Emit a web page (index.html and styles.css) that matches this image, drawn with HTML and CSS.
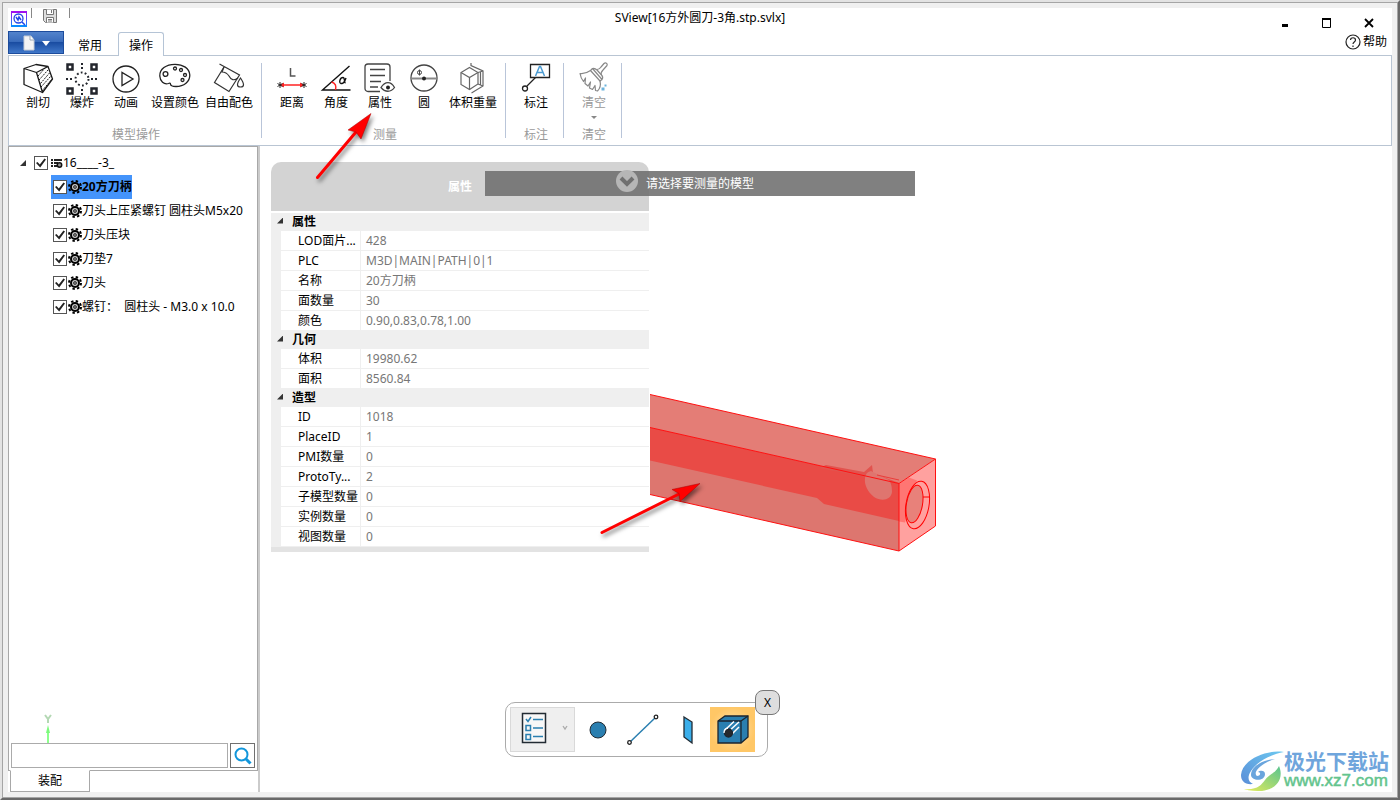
FILE: index.html
```html
<!doctype html>
<html lang="zh-CN">
<head>
  <meta charset="utf-8" />
  <title>SView[16方外圆刀-3角.stp.svlx]</title>
  <link rel="stylesheet" href="styles.css">
</head>

<body>
  <svg width="0" height="0" class="defs">
    <symbol id="gear" viewBox="0 0 14 14">
      <circle cx="7" cy="7" r="6" fill="none" stroke="#000" stroke-width="2" stroke-dasharray="2.4 2.31" />
      <circle cx="7" cy="7" r="4" fill="#ccc" stroke="#000" stroke-width="2" />
      <circle cx="7" cy="7" r="1.500" fill="#777" stroke="#444" />
    </symbol>
  </svg>
  <div class="frame">
    <header class="titlebar">
      <div class="quick">
        <svg class="logo" width="18" height="18" viewBox="0 0 18 18" fill="none">
          <defs>
            <linearGradient id="lg" x1="0" y1="0" x2="0" y2="1"><stop offset="0" stop-color="#a010ee" /><stop offset="1" stop-color="#0a8cff" /></linearGradient>
          </defs>
          <path d="M1 1h16v2H1z" fill="#a010ee" />
          <path d="M1 15h16v2H1z" fill="#0a8cff" />
          <rect x="1.500" y="1.500" width="15" height="15" stroke="url(#lg)" />
          <circle cx="8.500" cy="8.500" r="4.500" stroke="#2546e8" stroke-width="1.300" />
          <path d="M6 7l2 3 1-3 2 3M12 12l3 3" stroke="#2546e8" stroke-width="1.500" />
        </svg>
        <i></i>
        <button class="save" aria-label="保存">
          <svg width="16" height="16" viewBox="0 0 16 16" fill="none" stroke="#777">
            <path d="M1.500 1.500h13v13h-11l-2-2z" fill="#ddd" />
            <path d="M4.500 1.500v5h7v-5M4.500 14.500v-5h7v5" fill="#fff" />
            <path d="M9.500 2v3M6 11.500h4M6 13h4" />
          </svg>
        </button>
        <i></i>
      </div>
      <h1>SView[16方外圆刀-3角.stp.svlx]</h1>
      <div class="controls">
        <button aria-label="最小化"><svg width="12" height="12"><path d="M3 8.500h6" stroke="#000" stroke-width="3" /></svg></button>
        <button aria-label="最大化"><svg width="12" height="12" fill="none" stroke="#000"><path d="M1.500 1v9.500h8V1" /><path d="M1 2h9" stroke-width="2" /></svg></button>
        <button aria-label="关闭"><svg width="12" height="12"><path d="M2 2l8 8M10 2l-8 8" stroke="#000" stroke-width="1.800" /></svg></button>
      </div>
    </header>

    <nav class="tabs">
      <button class="file" aria-label="文件">
        <svg width="34" height="16" viewBox="0 0 34 16">
          <path d="M5 1h7l3 4v10H5z" fill="#f4f4f4" stroke="#c5ccd6" />
          <path d="M11 1v4h4" fill="#fff" stroke="#9aa7b8" />
          <path d="M23 6h8l-4 5z" fill="#fff" />
        </svg>
      </button>
      <button class="tab">常用</button>
      <button class="tab active">操作</button>
      <button class="help">
        <svg width="16" height="16" viewBox="0 0 16 16" fill="none" stroke="#222">
          <circle cx="8" cy="8" r="7" stroke-width="1.200" />
          <path d="M5.500 6c0-3 5-3 5 0 0 2-2.500 2-2.500 4M8 11.500v1.500" stroke-width="1.200" />
        </svg>帮助
      </button>
    </nav>

    <div class="ribbon">
      <section class="group">
        <div class="tools">
          <button class="tool">
            <svg width="32" height="32" fill="none" stroke="#1a1a1a" stroke-linejoin="round">
              <path d="M2 5.500L14 1.500 26 3.500 30.500 16 20.500 29.500 2 21.500z" stroke-width="1.300" />
              <path d="M2 5.500L14.500 9.500 20.500 29.500M14.500 9.500L26 3.500" stroke-width="1.300" />
              <path d="M16 13l7-8M17 17l9-10M18.500 20.500L27.500 10M19 24L29 13M20 28L30 16" stroke-dasharray="2 1" />
            </svg>剖切
          </button>
          <button class="tool">
            <svg width="32" height="32" fill="none" stroke="#23262d">
              <path d="M1.500 1.500h5v5h-5zM25.500 1.500h5v5h-5zM1.500 25.500h5v5h-5zM25.500 25.500h5v5h-5z" stroke-width="2.500" />
              <circle cx="16" cy="16" r="6.500" stroke-width="2" stroke-dasharray="1.800 2.280" />
              <path d="M16 0v6M16 26v6M0 16h7M25 16h7" stroke-width="2" stroke-dasharray="2 2" />
            </svg>爆炸
          </button>
          <button class="tool">
            <svg width="32" height="32" fill="none" stroke="#222" stroke-width="1.300">
              <circle cx="16" cy="16" r="13" />
              <path d="M12 9.500v13l11-6.500z" />
            </svg>动画
          </button>
          <button class="tool">
            <svg width="32" height="32" fill="none" stroke="#222" stroke-width="1.300">
              <path d="M9.500 20.500C5 22 1 18 .8 13 .5 6 7 1.300 16 1.300c8 0 14.500 4 14.800 10.700C31 18.500 25 23.500 17 23.500c-4 0-5.500-.500-5.500-2.500 0-1-1-1-2-.500z" />
              <circle cx="6.500" cy="11" r="2.400" /><circle cx="16" cy="5.500" r="1.500" /><circle cx="22" cy="7" r="1.500" />
              <circle cx="26" cy="12" r="1.500" /><circle cx="23.500" cy="17" r="1.500" />
            </svg>设置颜色
          </button>
          <button class="tool">
            <svg width="32" height="32" fill="none" stroke="#333" stroke-width="1.200">
              <path d="M11 4L1.500 19.500 16 28.500 26.500 12 6.500 1" />
              <path d="M11 4l-2 5c3 0 5 1 7 4 2 4 5 5 9 2" />
              <path d="M27.500 15c-4 6-4 9 0 9s4-3 0-9z" />
            </svg>自由配色
          </button>
        </div>
        <h2>模型操作</h2>
      </section>
      <i class="sep"></i>
      <section class="group">
        <div class="tools">
          <button class="tool">
            <svg width="32" height="32" fill="none">
              <path d="M14.500 5v8h5" stroke="#555" stroke-width="1.500" />
              <path d="M4 22h24" stroke="#f22" stroke-width="1.500" />
              <path d="M8 19.500l-4 2.500 4 2.500zM24 19.500l4 2.500-4 2.500z" fill="#f22" />
              <path d="M4 19v6M1.500 20.500l5 3M6.500 20.500l-5 3M28 19v6M25.500 20.500l5 3M30.500 20.500l-5 3" stroke="#222" />
            </svg>距离
          </button>
          <button class="tool">
            <svg width="32" height="32" fill="none" stroke="#111">
              <path d="M29.500 3L2.500 27h28" stroke-width="1.400" />
              <path d="M11.500 19c4 1 5 4 4 8" stroke="#f22" stroke-width="1.400" />
              <path d="M26 15c-1 3-3 6-5 5.500-2.500-.500-1-6 2-6 2 0 1 5 2.500 5.500" stroke-width="1.400" />
            </svg>角度
          </button>
          <button class="tool">
            <svg width="32" height="32" fill="none" stroke="#444" stroke-width="1.300">
              <path d="M16 28.500H4a3 3 0 0 1-3-3V4a3 3 0 0 1 3-3h19a3 3 0 0 1 3 3v14" />
              <path d="M6 6.500h15M6 12.500h15M6 18.500h11M6 24h8" />
              <path d="M17 24.500c4-6.500 10-6.500 13.500 0-3.500 5-9.500 5-13.500 0z" fill="#fff" />
              <circle cx="24" cy="24.500" r="2" fill="#222" stroke="none" />
            </svg>属性
          </button>
          <button class="tool">
            <svg width="32" height="32" fill="none" stroke="#444" stroke-width="1.300">
              <circle cx="16" cy="15" r="13" />
              <path d="M3 15.500h26" stroke="#888" stroke-width="2" />
              <circle cx="16" cy="15.500" r="2" fill="#222" stroke="none" />
              <circle cx="11.500" cy="9.500" r="2" stroke-width="1" /><path d="M11.500 6.500v6" stroke-width="1" />
            </svg>圆
          </button>
          <button class="tool">
            <svg width="32" height="32" fill="none" stroke="#666" stroke-width="1.200">
              <path d="M12.500 4.500L21 9.500V21l-8.500 5.500L4 21.500V9.500z" />
              <path d="M4 9.500l8.500 5L21 9.500M12.500 14.500v12" />
              <path d="M14 0v2.500l12 5.500v15l-11.500 7M21 9.500L26 8M21 21l5 2M23.500 9v13" />
            </svg>体积重量
          </button>
        </div>
        <h2>测量</h2>
      </section>
      <i class="sep"></i>
      <section class="group">
        <div class="tools">
          <button class="tool">
            <svg width="32" height="32" fill="none" stroke="#222" stroke-width="1.300">
              <path d="M10.500 1.500h19v13h-19z" />
              <path d="M15.500 14.500L7 23" />
              <circle cx="5" cy="25.500" r="2.500" />
              <path d="M15.500 13L19.500 3.500h1L24.500 13M17 9.500h6" stroke="#4b9bd2" stroke-width="1.500" />
            </svg>标注
          </button>
        </div>
        <h2>标注</h2>
      </section>
      <i class="sep"></i>
      <section class="group">
        <div class="tools">
          <button class="tool" disabled>
            <svg width="32" height="32" fill="none" stroke="#888" stroke-width="1.200" stroke-linejoin="round">
              <path d="M19 6.500c2 0 3-1 4-2.500l3-3.500c1.500-1.500 4 0 3 2L25 7c-1.500 1.500-2.500 3-1.500 5" />
              <path d="M14.500 5.500c1.500-.500 3 0 4.500 1.500l4.500 5c1.500 1.500 1.500 3 .5 4.500z" />
              <path d="M14.500 5.500l-2 2L22 18l2-1.500" />
              <path d="M12.500 7.500C9 10 6 11 2 10.500c.5 3 1.500 5.500 3.500 8l2-3.500-.5 5.500 3 2.500 2.500-4-1 6 3 1.500 2.500-4 .5 5 2 .5c3-3 3.500-6 2.500-10" />
              <path d="M23.500 24.500h3v3h-3zM26.500 21.500h2v2h-2z" fill="#6db3dc" stroke="none" />
            </svg>清空
            <svg width="6" height="4"><path d="M0 0h6L3 3z" fill="#888" /></svg>
          </button>
        </div>
        <h2>清空</h2>
      </section>
      <i class="sep"></i>
    </div>

    <main>
      <aside class="sidebar">
        <div class="tree-box">
          <ul class="tree">
            <li>
              <span class="arrow"></span>
              <label><input type="checkbox" checked>
                <svg width="12" height="12" viewBox="0 0 12 12"><path d="M0 2h2v2H0zM3 2h8v2H3zM0 5h2v2H0zM3 5h4v2H3zM0 8h2v2H0zM3 8h3v2H3z" fill="#222" /><circle cx="8.500" cy="8" r="2.200" fill="#999" stroke="#111" stroke-width="1.500" /></svg>16____-3_</label>
              <ul>
                <li><label class="selected"><input type="checkbox" checked><svg width="14" height="14"><use href="#gear" /></svg>20方刀柄</label></li>
                <li><label><input type="checkbox" checked><svg width="14" height="14"><use href="#gear" /></svg>刀头上压紧螺钉 圆柱头M5x20</label></li>
                <li><label><input type="checkbox" checked><svg width="14" height="14"><use href="#gear" /></svg>刀头压块</label></li>
                <li><label><input type="checkbox" checked><svg width="14" height="14"><use href="#gear" /></svg>刀垫7</label></li>
                <li><label><input type="checkbox" checked><svg width="14" height="14"><use href="#gear" /></svg>刀头</label></li>
                <li><label><input type="checkbox" checked><svg width="14" height="14"><use href="#gear" /></svg>螺钉：&nbsp; 圆柱头 - M3.0 x 10.0</label></li>
              </ul>
            </li>
          </ul>
          <svg class="axis" width="12" height="30" fill="none">
            <path d="M3 2l3 4 3-4M6 6v4" stroke="#b4d8b4" stroke-width="2" />
            <path d="M6 16v14" stroke="#8dff8d" stroke-width="2" />
            <path d="M6 12l2 8H4z" fill="#7cfa7c" />
          </svg>
          <form class="search">
            <input type="text" aria-label="搜索">
            <button aria-label="查找"><svg width="18" height="18" fill="none" stroke="#1296db"><circle cx="7.500" cy="7.500" r="6" stroke-width="2" /><path d="M12 12l4.500 4.500" stroke-width="3" /></svg></button>
          </form>
        </div>
        <button class="bottom-tab">装配</button>
      </aside>

      <div class="view">
        <!-- tool holder body -->
        <svg class="model" width="288" height="162" viewBox="649 392 288 162" fill="none">
          <path d="M650 394.500L935.500 459 899 483.500 650 427.500z" fill="#e47d76" />
          <path d="M650 427.500L899 483.500V551L650 494.500z" fill="#dd766f" />
          <path d="M650 427.500L899 483.500V521L824 504 817 498 650 460.500z" fill="#e94b46" />
          <path d="M819 468l7-3 38 7 8-7 1 8 26 10v.5z" fill="#e2534e" />
          <path d="M899 483.500L935.500 459V526L899 551z" fill="#ffa19f" />
          <path d="M899 483.500l10-6 8 3-12 42-6-1z" fill="#ff7673" />
          <path d="M865 478c-1 7 3 14 9 19 8 5 17 3 18-5 0-8-2-10-3-12l-18-9c-4 1-6 4-6 7z" fill="#df756f" />
          <path d="M650 427.500L899 483.500" stroke="#f11" />
          <path d="M877 475l22 5" stroke="#eb3d3a" />
          <ellipse cx="917.500" cy="505" rx="11.500" ry="24" transform="rotate(10 917.500 505)" fill="#ffa19f" stroke="#f00" />
          <ellipse cx="914.500" cy="504" rx="8" ry="19" transform="rotate(10 914.500 504)" fill="#e8817a" stroke="#f00" />
          <path d="M923 497h6" stroke="#f00" />
          <path d="M650 394.500L935.500 459V526L899 551 650 494.500M899 483.500V551M899 483.500L935.500 459" stroke="#f11" />
        </svg>

        <section class="panel">
          <header>
            <h2>属性</h2>
            <button aria-label="收起"><svg width="22" height="22" fill="none"><circle cx="11" cy="11" r="11" fill="#b6b6b6" /><path d="M5 8l6 6 6-6" stroke="#707070" stroke-width="4" /></svg></button>
          </header>
          <table>
            <colgroup><col class="name"><col></colgroup>
            <tbody>
              <tr class="cat"><th colspan="2"><span class="arrow"></span>属性</th></tr>
              <tr><th>LOD面片...</th><td>428</td></tr>
              <tr><th>PLC</th><td>M3D|MAIN|PATH|0|1</td></tr>
              <tr><th>名称</th><td>20方刀柄</td></tr>
              <tr><th>面数量</th><td>30</td></tr>
              <tr><th>颜色</th><td>0.90,0.83,0.78,1.00</td></tr>
            </tbody>
            <tbody>
              <tr class="cat"><th colspan="2"><span class="arrow"></span>几何</th></tr>
              <tr><th>体积</th><td>19980.62</td></tr>
              <tr><th>面积</th><td>8560.84</td></tr>
            </tbody>
            <tbody>
              <tr class="cat"><th colspan="2"><span class="arrow"></span>造型</th></tr>
              <tr><th>ID</th><td>1018</td></tr>
              <tr><th>PlaceID</th><td>1</td></tr>
              <tr><th>PMI数量</th><td>0</td></tr>
              <tr><th>ProtoTy...</th><td>2</td></tr>
              <tr><th>子模型数量</th><td>0</td></tr>
              <tr><th>实例数量</th><td>0</td></tr>
              <tr><th>视图数量</th><td>0</td></tr>
            </tbody>
          </table>
        </section>

        <div class="message">请选择要测量的模型</div>

        <div class="picker">
          <button class="filter" aria-label="选择过滤">
            <svg width="26" height="32" fill="none" stroke="#2a7fb0" stroke-width="1.500">
              <path d="M1.500 1.500h23v29h-23z" stroke="#222b33" fill="#f7f7f7" />
              <path d="M5 7l2 2.500L10 5M12 7.500h10M12 16h10M12 24.500h10M5 13.500h4.500v5H5zM5 22.500h4.500v5H5z" />
            </svg>
            <svg width="6" height="6" fill="none"><path d="M1 1l2 3 2-3" stroke="#aaa" stroke-width="1.300" /></svg>
          </button>
          <button aria-label="点"><svg width="32" height="32"><circle cx="16" cy="16" r="8" fill="#2a7fb0" stroke="#222b33" /></svg></button>
          <button aria-label="线"><svg width="32" height="32" fill="none" stroke="#222" stroke-width="1.300"><path d="M3 28L29 3" stroke="#2a7fb0" stroke-width="1.500" /><circle cx="2.500" cy="28.500" r="1.800" fill="#fff" /><circle cx="29" cy="3" r="1.800" fill="#fff" /></svg></button>
          <button aria-label="面"><svg width="32" height="32"><path d="M12 3l8 5v21l-8-6z" fill="#3aaeea" stroke="#222b33" stroke-width="1.300" /></svg></button>
          <button class="on" aria-label="体">
            <svg width="34" height="32" fill="#2a7fb0" stroke="#1c252e" stroke-width="1.300">
              <path d="M2 7l7-5h23v21l-7 6H2z" />
              <path d="M2 7h23v22M25 7l7-5" fill="none" />
              <path d="M9 16L18 7.500M12 18L23 8M15 21l8-8" stroke="#fff" stroke-width="1.500" />
              <circle cx="12.500" cy="19" r="4" fill="#26292d" stroke="#1c252e" />
              <path d="M8 19c0-3 1.500-4.500 4-5" fill="none" stroke="#fff" />
            </svg>
          </button>
          <button class="close">X</button>
        </div>

        <div class="watermark">
          <svg width="44" height="42" viewBox="0 0 44 42">
            <defs>
              <linearGradient id="wb" x1="0" y1="1" x2="1" y2="0"><stop offset="0" stop-color="#5a8ed8" /><stop offset="1" stop-color="#6cc8f0" /></linearGradient>
              <linearGradient id="wg" x1="0" y1="1" x2="1" y2="0"><stop offset="0" stop-color="#e8ec5a" /><stop offset="1" stop-color="#58c490" /></linearGradient>
            </defs>
            <path d="M44 2C26-1 2 10 1 25c0 6 4 10 12 9-5-2-6-7-2-13C17 12 29 5 44 2z" fill="url(#wb)" />
            <path d="M35 9c-12 1-24 7-24 16 0 6 14 7 14-1 0-4-5-4-7-2 3 0 3 4-1 4-5-4 5-13 18-17z" fill="#6aa5dd" />
            <path d="M4 39c14 1 17-4 21-9 4-6 10-6 14-14 6 14-5 24-17 25-6 0-12 0-18-2z" fill="url(#wg)" />
          </svg>
          <p><b>极光下载站</b><span>www.xz7.com</span></p>
        </div>
      </div>
    </main>
  </div>

  <!-- callout arrows -->
  <svg class="pointer p1" width="64" height="76" viewBox="312 110 64 76">
    <path d="M317.500 177.500L356 132" stroke="#f00" stroke-width="3" stroke-linecap="round" />
    <path d="M371 113.500L348 130l8 2 5 7z" fill="#f00" stroke="#a00" stroke-width=".5" />
  </svg>
  <svg class="pointer p2" width="112" height="64" viewBox="596 478 112 64">
    <path d="M602 532.500L679 494" stroke="#f00" stroke-width="3" stroke-linecap="round" />
    <path d="M700 483.500l-28 6 7 4 1 8z" fill="#f00" stroke="#a00" stroke-width=".5" />
  </svg>
</body>
</html>
```

FILE: styles.css
```css
* {
  box-sizing: border-box;
}
html {
  height: 100%;
}
body {
  position: relative;
  display: flex;
  min-height: 100%;
  margin: 0;
  border: 2px solid;
  border-color: #e3e3e3 #696969 #696969 #e3e3e3;
  font: 12px/14px "Noto Sans", "Noto Sans CJK SC", sans-serif;
  color: #000;
}
svg {
  display: block;
  flex: none;
}
.defs {
  position: absolute;
}
h1, h2, p, ul {
  margin: 0;
  padding: 0;
  font-size: 12px;
  font-weight: 400;
  list-style: none;
}
button {
  margin: 0;
  padding: 0;
  border: 0;
  background: none;
  font: inherit;
  color: inherit;
}
.frame {
  flex: 1;
  display: flex;
  flex-direction: column;
  border: 1px solid #a5a5a5;
  padding: 5px;
  background: linear-gradient(#fff, #fff) content-box, #f0f0f0;
}

/* title bar */
.titlebar {
  display: grid;
  grid-template-columns: 1fr auto 1fr;
  height: 23px;
}
.titlebar h1 {
  line-height: 20px;
}
.quick {
  display: flex;
  align-items: flex-start;
  padding-left: 2px;
}
.quick .logo {
  margin-top: 2px;
}
.quick i {
  width: 1px;
  height: 10px;
  margin: 0 10px 0 3px;
  background: #888;
}
.quick .save + i {
  margin-left: 11px;
}
.controls {
  display: flex;
  justify-content: flex-end;
  align-items: center;
  gap: 30px;
  padding: 6px 17px 0 0;
}

/* tabs */
.tabs {
  display: flex;
  height: 24px;
}
.file {
  display: flex;
  align-items: center;
  justify-content: center;
  width: 56px;
  height: 23px;
  border: 1px solid #1d4c9c;
  background: linear-gradient(#5383cc, #3b6dbc 45%, #1a4da2 50%, #3f77c9);
}
.tab {
  width: 46px;
  margin: 1px 0 -1px;
  padding-top: 2px;
  border: 1px solid transparent;
  border-bottom: 0;
}
.file + .tab {
  margin-left: 3px;
  margin-right: 5px;
}
.tab.active {
  position: relative;
  border-color: #b5c4d6;
  border-radius: 3px 3px 0 0;
  background: #fff;
}
.help {
  display: flex;
  align-items: center;
  gap: 2px;
  height: 21px;
  margin-left: auto;
  padding-right: 5px;
}

/* ribbon */
.ribbon {
  display: flex;
  padding: 7px 0 3px;
  border: 1px solid #b9c5d3;
}
.group {
  padding: 0 5px 0 8px;
}
.group:first-child {
  padding-left: 7px;
}
.group h2 {
  text-align: center;
  color: #9a9a9a;
}
.tools {
  display: flex;
  height: 65px;
}
.tool {
  display: flex;
  flex-direction: column;
  align-items: center;
  gap: 1px;
  min-width: 44px;
  padding: 0 3px;
  white-space: nowrap;
}
.tool:disabled {
  color: #999;
}
.tool svg {
  overflow: visible;
}
.tool svg + svg {
  margin-top: 5px;
}
.sep {
  width: 1px;
  height: 75px;
  background: #b9c5d9;
}

main {
  flex: 1;
  display: flex;
}

/* model tree */
.sidebar {
  display: flex;
  flex-direction: column;
  width: 252px;
  border-right: 2px solid #cbcbcb;
}
.tree-box {
  flex: 1;
  display: flex;
  flex-direction: column;
  padding: 4px 2px 2px;
  border: 1px solid #a8a8a8;
}
.tree li {
  position: relative;
  line-height: 24px;
  white-space: nowrap;
}
.tree > li {
  padding-left: 21px;
}
.tree ul {
  padding-left: 19px;
}
.tree label {
  display: inline-flex;
  align-items: center;
  height: 24px;
  padding-left: 2px;
  vertical-align: top;
}
.tree .selected {
  background: #4494fb;
  font-weight: 700;
}
.tree input {
  appearance: none;
  width: 14px;
  height: 14px;
  margin: 0 1px 0 0;
  border: 1px solid #555;
  background: #fff;
}
.tree > li > label > input {
  margin-right: 3px;
}
.tree input:checked::before {
  content: "";
  display: block;
  width: 10px;
  height: 10px;
  margin: 1px;
  background: #222;
  clip-path: polygon(0 50%, 15% 40%, 38% 65%, 85% 5%, 100% 15%, 42% 95%);
}
.arrow {
  display: inline-block;
  width: 6px;
  height: 6px;
  background: #333;
  clip-path: polygon(100% 0, 100% 100%, 0 100%);
}
.tree .arrow {
  position: absolute;
  left: 9px;
  top: 9px;
}
.axis {
  margin: auto 0 0 31px;
}
.search {
  display: flex;
  gap: 2px;
  height: 25px;
}
.search input {
  flex: 1;
  min-width: 0;
  border: 1px solid #ababab;
  font: inherit;
}
.search button {
  display: flex;
  align-items: center;
  justify-content: center;
  width: 25px;
  border: 1px solid #707070;
}
.bottom-tab {
  width: 80px;
  height: 22px;
  margin: -1px 0 0 2px;
  border: 1px solid #a8a8a8;
  border-top-color: #fff;
  background: #fff;
}

/* 3d view */
.view {
  flex: 1;
}
.model {
  position: absolute;
  left: 647px;
  top: 390px;
}
.panel {
  position: absolute;
  left: 269px;
  top: 160px;
  width: 378px;
  border-bottom: 5px solid #e3e3e3;
}
.panel header {
  display: flex;
  align-items: center;
  justify-content: center;
  height: 49px;
  margin-bottom: 2px;
  border-radius: 10px 10px 0 0;
  background: #d3d3d3;
}
.panel h2 {
  font-weight: 700;
  color: #fff;
}
.panel header button {
  position: absolute;
  z-index: 2;
  top: 8px;
  right: 11px;
}
.panel table {
  width: 100%;
  table-layout: fixed;
  border-spacing: 0;
  background: #fff;
}
.panel .name {
  width: 90px;
}
.panel tr {
  height: 20px;
}
.panel th, .panel td {
  padding: 0 0 0 5px;
  border-bottom: 1px solid #efefef;
  text-align: left;
  white-space: nowrap;
  font-weight: 400;
}
.panel th {
  padding-left: 17px;
  border-left: 10px solid #efefef;
  border-right: 1px solid #efefef;
}
.panel td {
  color: #777;
}
.panel .cat {
  height: 18px;
}
.panel .cat th {
  padding: 0;
  border-left-width: 6px;
  background: #efefef;
  font-weight: 700;
}
.panel .arrow {
  margin-right: 9px;
  vertical-align: 2px;
}
.message {
  position: absolute;
  z-index: 1;
  top: 169px;
  left: 50%;
  width: 430px;
  margin-left: -215px;
  background: rgba(110, 110, 110, .88);
  color: #fff;
  line-height: 25px;
  text-align: center;
}

/* selection toolbar */
.picker {
  position: absolute;
  left: 503px;
  bottom: 41px;
  display: flex;
  padding: 4px 12px 4px 4px;
  border: 1px solid #ababab;
  border-radius: 10px;
  background: #fff;
}
.picker button {
  display: flex;
  align-items: center;
  justify-content: center;
  width: 45px;
  height: 45px;
}
.picker .filter {
  width: 65px;
  gap: 15px;
  padding: 0 0 3px 3px;
  border: 1px solid #d9d9d9;
  background: #efefef;
}
.picker .on {
  background: radial-gradient(#ffe3b0, #ffc766 70%);
}
.picker .close {
  position: absolute;
  top: -13px;
  right: -13px;
  width: 25px;
  height: 25px;
  border: 1px solid #777;
  border-radius: 8px;
  background: #dedede;
}

.watermark {
  position: absolute;
  right: 9px;
  bottom: 6px;
  display: flex;
  align-items: center;
}
.watermark b, .watermark span {
  display: block;
}
.watermark b {
  color: #6fa5dc;
  font-size: 21px;
  line-height: 20px;
}
.watermark span {
  color: #63c48d;
  font: 17px/20px "Liberation Sans", sans-serif;
  -webkit-text-stroke: .5px #63c48d;
}
.pointer {
  position: absolute;
  z-index: 3;
  filter: drop-shadow(2px 3px 2px rgba(0, 0, 0, .5));
}
.p1 {
  left: 310px;
  top: 108px;
}
.p2 {
  left: 594px;
  top: 476px;
}
```
